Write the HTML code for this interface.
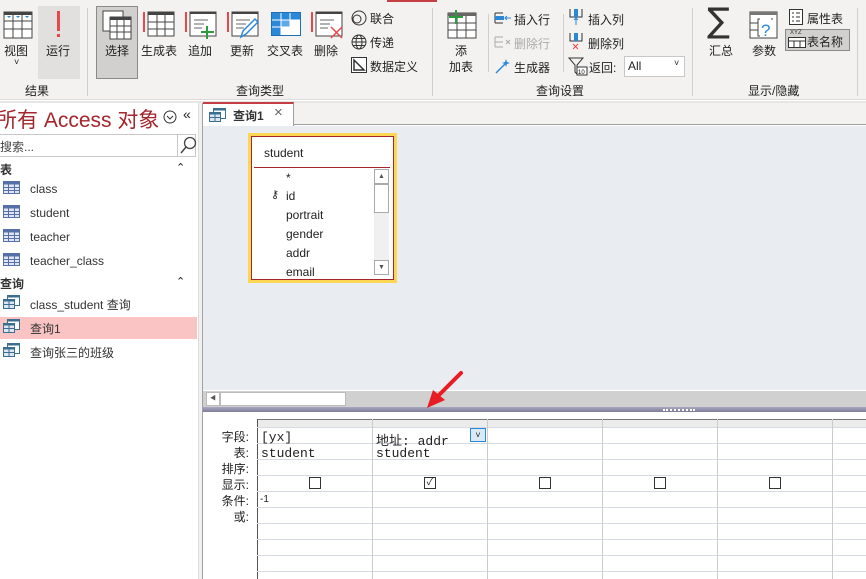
<!DOCTYPE html>
<html><head><meta charset="utf-8"><style>
*{margin:0;padding:0;box-sizing:border-box}
body{width:866px;height:579px;overflow:hidden;position:relative;background:#fff;font-family:"Liberation Sans","Noto Sans CJK SC",sans-serif;font-size:12px;color:#222}
.a{position:absolute}
.lbl{position:absolute;font-size:12px;color:#222;white-space:nowrap}
.nav{position:absolute;left:30px;font-size:12px;color:#333}
.row{position:absolute;left:257px;width:609px;height:1px;background:#d6dbe3}
.col{position:absolute;top:419px;width:1px;height:160px;background:#c8ccd4}
.rl{position:absolute;left:205px;width:44px;text-align:right;font-size:12px;color:#222}
.cb{position:absolute;width:12px;height:12px;border:1px solid #333;background:#fff}
.mono{position:absolute;font-family:"Liberation Mono","Noto Sans CJK SC",monospace;font-size:13px;color:#222}
.fld{position:absolute;left:286px;font-size:12px;color:#222}
</style></head><body>
<div class="a" style="left:0;top:0;width:866px;height:100px;background:#f3f2f1;border-bottom:1px solid #dcdcdc"></div>
<div class="a" style="left:387px;top:0;width:50px;height:2px;background:#c43e44"></div>
<div class="a" style="left:87px;top:8px;width:1px;height:88px;background:#d0d0d0"></div>
<div class="a" style="left:432px;top:8px;width:1px;height:88px;background:#d0d0d0"></div>
<div class="a" style="left:692px;top:8px;width:1px;height:88px;background:#d0d0d0"></div>
<div class="a" style="left:857px;top:8px;width:1px;height:88px;background:#d0d0d0"></div>
<svg class="a" style="left:3px;top:11px" width="30" height="28"><rect x="1" y="1" width="28" height="26" fill="#fff" stroke="#444"/><rect x="1" y="1" width="28" height="3" fill="#444"/><path d="M1 10H29M1 18H29M10 4V27M19 4V27" stroke="#444"/><path d="M4 5h4l-2 2zM13 5h4l-2 2zM22 5h4l-2 2z" fill="#2b88d8"/></svg>
<div class="lbl" style="left:4px;top:42px">视图</div>
<div class="lbl" style="left:14px;top:57px;font-size:9px">˅</div>
<div class="a" style="left:38px;top:6px;width:42px;height:73px;background:#e1e0df"></div>
<div class="a" style="left:57px;top:11px;width:3px;height:20px;background:#e8474e"></div>
<div class="a" style="left:57px;top:34px;width:3px;height:3px;background:#e8474e"></div>
<div class="lbl" style="left:46px;top:42px">运行</div>
<div class="lbl" style="left:25px;top:82px">结果</div>
<div class="a" style="left:96px;top:6px;width:42px;height:73px;background:#d1d0cf;border:1px solid #8a8a8a"></div>
<svg class="a" style="left:102px;top:10px" width="30" height="30"><rect x="1" y="1" width="20" height="20" fill="#fff" stroke="#444"/><rect x="8" y="7" width="21" height="22" fill="#fff" stroke="#444"/><rect x="8" y="7" width="21" height="3" fill="#444"/><path d="M8 16H29M8 22H29M15 10V29M22 10V29" stroke="#444"/></svg>
<div class="lbl" style="left:105px;top:42px">选择</div>
<svg class="a" style="left:143px;top:10px" width="32" height="28"><rect x="0" y="2" width="2" height="20" fill="#e8474e"/><rect x="5" y="2" width="26" height="24" fill="#fff" stroke="#444"/><rect x="5" y="2" width="26" height="3" fill="#444"/><path d="M5 12H31M5 19H31M14 5V26M22 5V26" stroke="#444"/></svg>
<div class="lbl" style="left:141px;top:42px">生成表</div>
<svg class="a" style="left:185px;top:10px" width="32" height="30"><rect x="0" y="2" width="2" height="20" fill="#e8474e"/><rect x="5" y="2" width="26" height="24" fill="#fff" stroke="#444"/><rect x="5" y="2" width="26" height="2" fill="#444"/><path d="M9 10h14M9 14h10M9 18h8" stroke="#666"/><path d="M22 16v13M16 22h13" stroke="#2e9a3e" stroke-width="2"/></svg>
<div class="lbl" style="left:188px;top:42px">追加</div>
<svg class="a" style="left:227px;top:10px" width="32" height="30"><rect x="0" y="2" width="2" height="20" fill="#e8474e"/><rect x="5" y="2" width="26" height="24" fill="#fff" stroke="#444"/><rect x="5" y="2" width="26" height="2" fill="#444"/><path d="M9 10h14M9 14h10M9 18h8" stroke="#666"/><path d="M14 27l2-6 12-12 3 3-12 12z" fill="#fff" stroke="#2b88d8" stroke-width="1.5"/></svg>
<div class="lbl" style="left:230px;top:42px">更新</div>
<svg class="a" style="left:271px;top:12px" width="30" height="24"><rect x="0.5" y="0.5" width="29" height="23" fill="#fff" stroke="#1f6fb5"/><rect x="1" y="1" width="28" height="7" fill="#2b88d8"/><rect x="1" y="1" width="9" height="22" fill="#2b88d8"/><rect x="10" y="8" width="9" height="7" fill="#5ea9e6"/><path d="M1 8H29M1 15H29M10 1V23M19 1V23" stroke="#fff"/></svg>
<div class="lbl" style="left:267px;top:42px">交叉表</div>
<svg class="a" style="left:311px;top:10px" width="34" height="30"><rect x="0" y="2" width="2" height="20" fill="#e8474e"/><rect x="5" y="2" width="26" height="24" fill="#fff" stroke="#444"/><rect x="5" y="2" width="26" height="2" fill="#444"/><path d="M9 10h14M9 14h10M9 18h8" stroke="#666"/><path d="M20 17l11 11M31 17l-11 11" stroke="#e8474e" stroke-width="1.5"/></svg>
<div class="lbl" style="left:314px;top:42px">删除</div>
<svg class="a" style="left:351px;top:10px" width="16" height="16"><circle cx="8" cy="8" r="7" fill="none" stroke="#333"/><circle cx="6" cy="9" r="4" fill="none" stroke="#333"/></svg>
<div class="lbl" style="left:370px;top:10px">联合</div>
<svg class="a" style="left:351px;top:34px" width="16" height="16"><circle cx="8" cy="8" r="7" fill="none" stroke="#333"/><ellipse cx="8" cy="8" rx="3" ry="7" fill="none" stroke="#333"/><path d="M1 8h14M2 4.5h12M2 11.5h12" stroke="#333"/></svg>
<div class="lbl" style="left:370px;top:34px">传递</div>
<svg class="a" style="left:351px;top:57px" width="16" height="16"><rect x="0.5" y="0.5" width="15" height="15" fill="#fff" stroke="#333"/><path d="M3 3v10h10z" fill="none" stroke="#333" stroke-width="1.5"/></svg>
<div class="lbl" style="left:370px;top:58px">数据定义</div>
<div class="lbl" style="left:236px;top:82px">查询类型</div>
<svg class="a" style="left:446px;top:10px" width="32" height="30"><rect x="2" y="3" width="28" height="25" fill="#fff" stroke="#444"/><rect x="2" y="3" width="28" height="3" fill="#666"/><path d="M2 13H30M2 20H30M11 6V28M20 6V28" stroke="#444"/><path d="M10 0v14M3 7h14" stroke="#2e9a3e" stroke-width="2"/></svg>
<div class="lbl" style="left:455px;top:42px">添</div>
<div class="lbl" style="left:449px;top:58px">加表</div>
<div class="a" style="left:488px;top:14px;width:1px;height:58px;background:#d0d0d0"></div>
<div class="a" style="left:563px;top:14px;width:1px;height:58px;background:#d0d0d0"></div>
<svg class="a" style="left:494px;top:11px" width="18" height="14"><path d="M1 2h8M1 12h8M1 2v10" stroke="#333" fill="none"/><rect x="1" y="5" width="9" height="4" fill="#2b88d8"/><path d="M17 7h-6M13 5l-2 2 2 2" stroke="#2b88d8" fill="none"/></svg>
<div class="lbl" style="left:514px;top:11px">插入行</div>
<svg class="a" style="left:494px;top:35px" width="18" height="14"><path d="M1 2h8M1 12h8M1 2v10M1 7h8" stroke="#aaa" fill="none"/><path d="M12 5l4 4M16 5l-4 4" stroke="#aaa"/></svg>
<div class="lbl" style="left:514px;top:35px;color:#aaa">删除行</div>
<svg class="a" style="left:494px;top:57px" width="18" height="18"><path d="M2 16l9-9" stroke="#2b88d8" stroke-width="1.5"/><path d="M12 2l1 3 3 1-3 1-1 3-1-3-3-1 3-1z" fill="#2b88d8"/></svg>
<div class="lbl" style="left:514px;top:59px">生成器</div>
<svg class="a" style="left:568px;top:8px" width="16" height="18"><path d="M2 1v8h12V1" stroke="#333" fill="none"/><rect x="6" y="1" width="4" height="8" fill="#2b88d8"/><path d="M8 17V10M6 12l2-2 2 2" stroke="#2b88d8" fill="none"/></svg>
<div class="lbl" style="left:588px;top:11px">插入列</div>
<svg class="a" style="left:568px;top:32px" width="16" height="18"><path d="M2 1v8h12V1" stroke="#333" fill="none"/><rect x="6" y="1" width="4" height="8" fill="#2b88d8"/><path d="M5 12l5 5M10 12l-5 5" stroke="#e8474e"/></svg>
<div class="lbl" style="left:588px;top:35px">删除列</div>
<svg class="a" style="left:568px;top:56px" width="20" height="20"><path d="M1 2h14l-6 7v9l-2-2V9z" fill="none" stroke="#333"/><rect x="9" y="11" width="10" height="8" fill="#fff" stroke="#333"/><text x="10" y="18" font-size="6" font-family="Liberation Sans">10</text></svg>
<div class="lbl" style="left:589px;top:59px">返回:</div>
<div class="a" style="left:624px;top:56px;width:61px;height:21px;background:#fff;border:1px solid #c8c8c8"></div>
<div class="lbl" style="left:628px;top:59px">All</div>
<div class="lbl" style="left:674px;top:58px;font-size:9px">˅</div>
<div class="lbl" style="left:536px;top:82px">查询设置</div>
<div class="a" style="left:707px;top:4px;font-size:34px;color:#333;font-family:'DejaVu Sans',sans-serif;line-height:34px">∑</div>
<div class="lbl" style="left:709px;top:42px">汇总</div>
<svg class="a" style="left:749px;top:10px" width="30" height="30"><rect x="1" y="2" width="27" height="26" fill="#fff" stroke="#444"/><rect x="1" y="2" width="27" height="3" fill="#777"/><path d="M1 13h8M1 20h8M11 9h-2v17h2M22 9h2" stroke="#444" fill="none"/><text x="12" y="26" font-size="17" fill="#2b88d8" font-family="Liberation Sans">?</text></svg>
<div class="lbl" style="left:752px;top:42px">参数</div>
<svg class="a" style="left:789px;top:9px" width="14" height="16"><rect x="0.5" y="0.5" width="13" height="15" fill="#fff" stroke="#333"/><path d="M3 4h2M3 8h2M3 12h2M7 4h4M7 8h4M7 12h4" stroke="#333"/></svg>
<div class="lbl" style="left:807px;top:10px">属性表</div>
<div class="a" style="left:785px;top:29px;width:65px;height:22px;background:#d1d0cf;border:1px solid #8a8a8a"></div>
<div class="a" style="left:790px;top:30px;font-size:6px;color:#333">XYZ</div>
<svg class="a" style="left:788px;top:37px" width="18" height="12"><rect x="0.5" y="0.5" width="17" height="10" fill="#fff" stroke="#333"/><path d="M0 4h18M6 4v7M12 4v7" stroke="#333"/></svg>
<div class="lbl" style="left:807px;top:33px">表名称</div>
<div class="lbl" style="left:748px;top:82px">显示/隐藏</div>
<div class="a" style="left:0;top:101px;width:866px;height:2px;background:#e6e6e6"></div>
<div class="a" style="left:0;top:103px;width:198px;height:476px;background:#fff"></div>
<div class="a" style="left:-4px;top:104px;font-size:21px;color:#a4262c;white-space:nowrap">所有 Access 对象</div>
<svg class="a" style="left:163px;top:110px" width="14" height="14"><circle cx="7" cy="7" r="6" fill="none" stroke="#333"/><path d="M4 6l3 3 3-3" fill="none" stroke="#333"/></svg>
<div class="lbl" style="left:183px;top:106px;font-size:14px">«</div>
<div class="a" style="left:-1px;top:134px;width:197px;height:23px;border:1px solid #c8c8c8;background:#fff"></div>
<div class="a" style="left:177px;top:134px;width:1px;height:23px;background:#c8c8c8"></div>
<svg class="a" style="left:179px;top:136px" width="18" height="19"><circle cx="11" cy="7" r="5.5" fill="none" stroke="#444" stroke-width="1.3"/><path d="M7 11l-5 6" stroke="#444" stroke-width="1.5"/></svg>
<div class="lbl" style="left:0;top:138px;color:#444">搜索...</div>
<div class="lbl" style="left:0;top:161px;font-weight:bold;color:#333">表</div>
<div class="lbl" style="left:176px;top:161px;font-size:11px">⌃</div>
<div class="lbl" style="left:0;top:275px;font-weight:bold;color:#333">查询</div>
<div class="lbl" style="left:176px;top:275px;font-size:11px">⌃</div>
<svg width="0" height="0" style="position:absolute"><defs>
<g id="tb"><rect x="0.5" y="0.5" width="16" height="12" fill="#dfe6f3" stroke="#5870a8"/><rect x="0.5" y="0.5" width="16" height="3" fill="#5870a8"/><path d="M0 6.5h17M0 9.5h17M5.5 3v10M11.5 3v10" stroke="#5870a8"/></g>
<g id="qi"><rect x="4.5" y="0.5" width="12" height="10" fill="#fff" stroke="#3a6f8f"/><rect x="4.5" y="0.5" width="12" height="2" fill="#3a6f8f"/><rect x="0.5" y="4.5" width="11" height="9" fill="#dfe6f3" stroke="#3a6f8f"/><rect x="0.5" y="4.5" width="11" height="2" fill="#3a6f8f"/><path d="M0 9.5h12M6 6v8" stroke="#3a6f8f"/></g>
</defs></svg>
<svg class="a" style="left:3px;top:181px" width="18" height="14"><use href="#tb"/></svg>
<svg class="a" style="left:3px;top:205px" width="18" height="14"><use href="#tb"/></svg>
<svg class="a" style="left:3px;top:229px" width="18" height="14"><use href="#tb"/></svg>
<svg class="a" style="left:3px;top:253px" width="18" height="14"><use href="#tb"/></svg>
<div class="nav" style="top:182px">class</div>
<div class="nav" style="top:206px">student</div>
<div class="nav" style="top:230px">teacher</div>
<div class="nav" style="top:254px">teacher_class</div>
<div class="a" style="left:0;top:317px;width:197px;height:22px;background:#fbc4c4"></div>
<svg class="a" style="left:3px;top:295px" width="18" height="15"><use href="#qi"/></svg>
<svg class="a" style="left:3px;top:319px" width="18" height="15"><use href="#qi"/></svg>
<svg class="a" style="left:3px;top:343px" width="18" height="15"><use href="#qi"/></svg>
<div class="nav" style="top:296px">class_student 查询</div>
<div class="nav" style="top:320px">查询1</div>
<div class="nav" style="top:344px">查询张三的班级</div>
<div class="a" style="left:198px;top:103px;width:4px;height:476px;background:#f0f0f0;border-left:1px solid #ddd"></div>
<div class="a" style="left:202px;top:103px;width:1px;height:476px;background:#a0a0a0"></div>
<div class="a" style="left:203px;top:103px;width:663px;height:22px;background:#f3f2f1;border-bottom:1px solid #a0a0a0"></div>
<div class="a" style="left:203px;top:102px;width:91px;height:24px;background:#fff;border-top:2px solid #c43e44;border-right:1px solid #a0a0a0"></div>
<svg class="a" style="left:209px;top:108px" width="18" height="15"><use href="#qi"/></svg>
<div class="lbl" style="left:233px;top:107px;font-weight:bold;color:#333">查询1</div>
<div class="lbl" style="left:274px;top:104px;font-size:15px;color:#666">×</div>
<div class="a" style="left:203px;top:126px;width:663px;height:264px;background:#e9ecf0"></div>
<div class="a" style="left:248px;top:133px;width:149px;height:150px;border:3px solid #fcd655;background:#fff"></div>
<div class="a" style="left:251px;top:136px;width:143px;height:144px;border:1px solid #a4262c"></div>
<div class="lbl" style="left:264px;top:146px;color:#222">student</div>
<div class="a" style="left:254px;top:167px;width:136px;height:1px;background:#a4262c"></div>
<div class="a" style="left:374px;top:169px;width:15px;height:106px;background:#f0f0f0"></div>
<div class="a" style="left:374px;top:169px;width:15px;height:15px;border:1px solid #aaa;background:#fff;font-size:7px;text-align:center;line-height:13px;color:#555">▲</div>
<div class="a" style="left:374px;top:184px;width:15px;height:29px;border:1px solid #aaa;background:#fff"></div>
<div class="a" style="left:374px;top:260px;width:15px;height:15px;border:1px solid #aaa;background:#fff;font-size:7px;text-align:center;line-height:13px;color:#555">▼</div>
<div class="fld" style="top:171px">*</div>
<div class="a" style="left:271px;top:188px;font-size:11px">⚷</div>
<div class="fld" style="top:189px">id</div>
<div class="fld" style="top:208px">portrait</div>
<div class="fld" style="top:227px">gender</div>
<div class="fld" style="top:246px">addr</div>
<div class="fld" style="top:265px">email</div>
<div class="a" style="left:203px;top:390px;width:663px;height:17px;background:#d0d0d0;border-top:1px solid #fff"></div>
<div class="a" style="left:206px;top:392px;width:14px;height:14px;background:#fff;border:1px solid #bbb;font-size:6px;line-height:12px;text-align:center;color:#555">◀</div>
<div class="a" style="left:220px;top:392px;width:126px;height:14px;background:#fff;border:1px solid #bbb"></div>
<div class="a" style="left:203px;top:407px;width:663px;height:5px;background:linear-gradient(#a9a8c0,#7d7b99)"></div>
<div class="a" style="left:663px;top:409px;width:32px;height:2px;border-top:2px dotted #fff"></div>
<svg class="a" style="left:415px;top:365px" width="60" height="50"><path d="M46 8L22 32" stroke="#e81c24" stroke-width="4" stroke-linecap="round"/><path d="M12 43l6-18 12 10z" fill="#e81c24"/></svg>
<div class="a" style="left:257px;top:419px;width:609px;height:8px;background:#ececec;border-top:1px solid #777"></div>
<div class="a" style="left:257px;top:419px;width:1px;height:160px;background:#555"></div>
<div class="row" style="top:427px"></div>
<div class="row" style="top:443px"></div>
<div class="row" style="top:459px"></div>
<div class="row" style="top:475px"></div>
<div class="row" style="top:491px"></div>
<div class="row" style="top:507px"></div>
<div class="row" style="top:523px"></div>
<div class="row" style="top:539px"></div>
<div class="row" style="top:555px"></div>
<div class="row" style="top:571px"></div>
<div class="col" style="left:372px"></div>
<div class="col" style="left:487px"></div>
<div class="col" style="left:602px"></div>
<div class="col" style="left:717px"></div>
<div class="col" style="left:832px"></div>
<div class="rl" style="top:428px">字段:</div>
<div class="rl" style="top:444px">表:</div>
<div class="rl" style="top:460px">排序:</div>
<div class="rl" style="top:476px">显示:</div>
<div class="rl" style="top:492px">条件:</div>
<div class="rl" style="top:508px">或:</div>
<div class="mono" style="left:261px;top:430px">[yx]</div>
<div class="mono" style="left:376px;top:430px">地址: addr</div>
<div class="a" style="left:470px;top:428px;width:16px;height:14px;border:1px solid #2b88d8;background:#dbe8f6;font-size:9px;text-align:center;line-height:12px">˅</div>
<div class="mono" style="left:261px;top:446px">student</div>
<div class="mono" style="left:376px;top:446px">student</div>
<div class="cb" style="left:309px;top:477px"></div>
<div class="cb" style="left:424px;top:477px;font-size:10px;line-height:10px;text-align:center">✓</div>
<div class="cb" style="left:539px;top:477px"></div>
<div class="cb" style="left:654px;top:477px"></div>
<div class="cb" style="left:769px;top:477px"></div>
<div class="lbl" style="left:260px;top:494px;font-size:10px">-1</div>
</body></html>
